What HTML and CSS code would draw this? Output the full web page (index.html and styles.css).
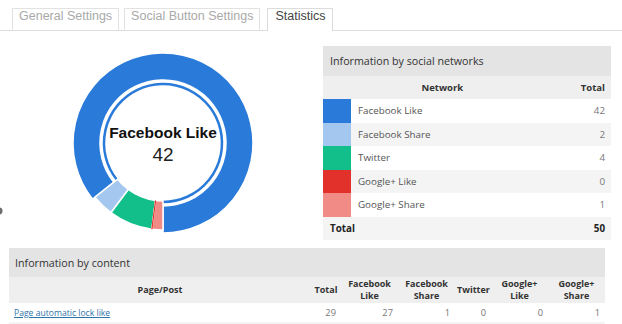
FILE: index.html
```html
<!DOCTYPE html>
<html lang="en">
<head>
  <meta charset="UTF-8">
  <title>Statistics</title>
  <link rel="stylesheet" href="styles.css">
</head>
<body>
 <div class="tabs">
   <a class="tab">General Settings</a>
   <a class="tab">Social Button Settings</a>
   <a class="tab active">Statistics</a>
 </div>

 <div class="stats">
   <!-- donut chart -->
   <svg class="chart" width="323" height="200" viewBox="0 0 323 200">
     <circle cx="-1" cy="172" r="3.5" fill="#6d6d6d"/>
     <path d="M92.64 160.12 A90 90 0 1 1 163 194 L163 167 A63 63 0 1 0 113.75 143.28 Z" fill="#2a7bd9" stroke="#fff" stroke-width="1.5"/>
     <path d="M116.87 140.79 A59 59 0 1 1 163 163" fill="none" stroke="#2a7bd9" stroke-width="2.5"/>
     <path d="M110.97 173.72 A87 87 0 0 1 94.98 158.24 L117.66 140.16 A58 58 0 0 0 128.31 150.48 Z" fill="#a4c7ef" stroke="#fff" stroke-width="1.5"/>
     <path d="M151.87 190.29 A87 87 0 0 1 110.97 173.72 L128.31 150.48 A58 58 0 0 0 155.58 161.52 Z" fill="#12bf8a" stroke="#fff" stroke-width="1.5"/>
     <path d="M163 191 A87 87 0 0 1 151.87 190.29 L155.58 161.52 A58 58 0 0 0 163 162 Z" fill="#f08b85" stroke="#fff" stroke-width="1.5"/>
     <line x1="155.58" y1="161.52" x2="151.87" y2="190.29" stroke="#e2302a" stroke-width="1.2"/>
     <text class="chartLabel" x="163" y="99" text-anchor="middle">Facebook Like</text>
     <text class="chartValue" x="163" y="122" text-anchor="middle">42</text>
   </svg>

   <table class="networks">
     <tr class="title"><th colspan="3">Information by social networks</th></tr>
     <tr class="head"><th></th><th class="center">Network</th><th class="num">Total</th></tr>
     <tr><td class="sw fbLike"></td><td>Facebook Like</td><td class="num">42</td></tr>
     <tr class="alt"><td class="sw fbShare"></td><td>Facebook Share</td><td class="num">2</td></tr>
     <tr><td class="sw twitter"></td><td>Twitter</td><td class="num">4</td></tr>
     <tr class="alt"><td class="sw gpLike"></td><td>Google+ Like</td><td class="num">0</td></tr>
     <tr><td class="sw gpShare"></td><td>Google+ Share</td><td class="num">1</td></tr>
     <tr class="alt total"><td colspan="2">Total</td><td class="num">50</td></tr>
   </table>
 </div>

 <table class="content">
   <colgroup>
     <col class="cPage"><col class="cTotal"><col class="cNum"><col class="cNum">
     <col class="cTw"><col class="cNum"><col class="cNum">
   </colgroup>
   <tr class="title"><th colspan="7">Information by content</th></tr>
   <tr class="head">
     <th>Page/Post</th><th>Total</th><th>Facebook<br>Like</th><th>Facebook<br>Share</th>
     <th>Twitter</th><th>Google+<br>Like</th><th>Google+<br>Share</th>
   </tr>
   <tr>
     <td><a href="#">Page automatic lock like</a></td>
     <td class="num">29</td><td class="num">27</td><td class="num">1</td>
     <td class="num">0</td><td class="num">0</td><td class="num">1</td>
   </tr>
   <tr class="alt"><td colspan="7"></td></tr>
 </table>
</body>
</html>
```

FILE: styles.css
```css
html,body{margin:0;padding:0;background:#fff;}
body{font-family:"Open Sans","DejaVu Sans",sans-serif;color:#555;overflow:hidden;}

/* tabs */
.tabs{display:flex;padding:8px 0 0 12px;border-bottom:1px solid #dcdcdc;height:22px;box-sizing:content-box;}
.tab{display:block;height:21px;line-height:21px;padding:0 6px;margin-right:5px;
     border:1px solid #e2e2e2;border-bottom:none;font:12.5px "Liberation Sans",Arial,sans-serif;color:#a9a9a9;}
.tab.active{color:#444;border-color:#dcdcdc;background:#fff;height:22px;margin-bottom:-1px;padding:0 7px;margin-left:2px;}

/* chart + network table */
.stats{display:flex;align-items:flex-start;padding-top:8px;}
.chart{display:block;flex:none;overflow:visible;}
.chartLabel{font:bold 15.5px "Liberation Sans",Arial,sans-serif;fill:#111;}
.chartValue{font:19px "Liberation Sans",Arial,sans-serif;fill:#222;}

table{border-collapse:collapse;border-spacing:0;}
.networks{width:288px;margin-top:7px;font-size:9.8px;}
.networks td{height:23.5px;padding:0 6px 0 7px;}
.networks td.sw{width:28px;padding:0;}
.title th{background:#e4e4e4;height:30px;padding:0 7px;text-align:left;font-weight:normal;font-size:10.7px;color:#333;}
.head th{background:#efefef;font-size:9.5px;font-weight:bold;color:#333;}
.networks .head th{height:23px;padding:0 6px;}
.alt td{background:#f4f4f4;}
.center{text-align:center;}
.num{text-align:right;color:#777;}
.head th.num{color:#333;}
.total td{font-weight:bold;color:#222;}
.total td.num{color:#222;}

.fbLike{background:#2a7bd9;}
.alt td.fbShare{background:#a4c7ef;}
.twitter{background:#12bf8a;}
.alt td.gpLike{background:#e2302a;}
.gpShare{background:#f08b85;}

/* content table */
.content{table-layout:fixed;width:596px;margin:8px 0 0 9px;font-size:9.3px;}
.content .title th{height:29px;padding-left:6px;}
.content .head th{height:26px;font-size:9px;line-height:12px;padding:0 2px;text-align:center;}
.content td{height:19px;padding:0 5px;}
.content .alt td{height:6px;}
.content a{color:#2f74a8;font-size:8.6px;}
.cPage{width:302px;}
.cTotal{width:30px;}
.cNum{width:57px;}
.cTw{width:36px;}
```
